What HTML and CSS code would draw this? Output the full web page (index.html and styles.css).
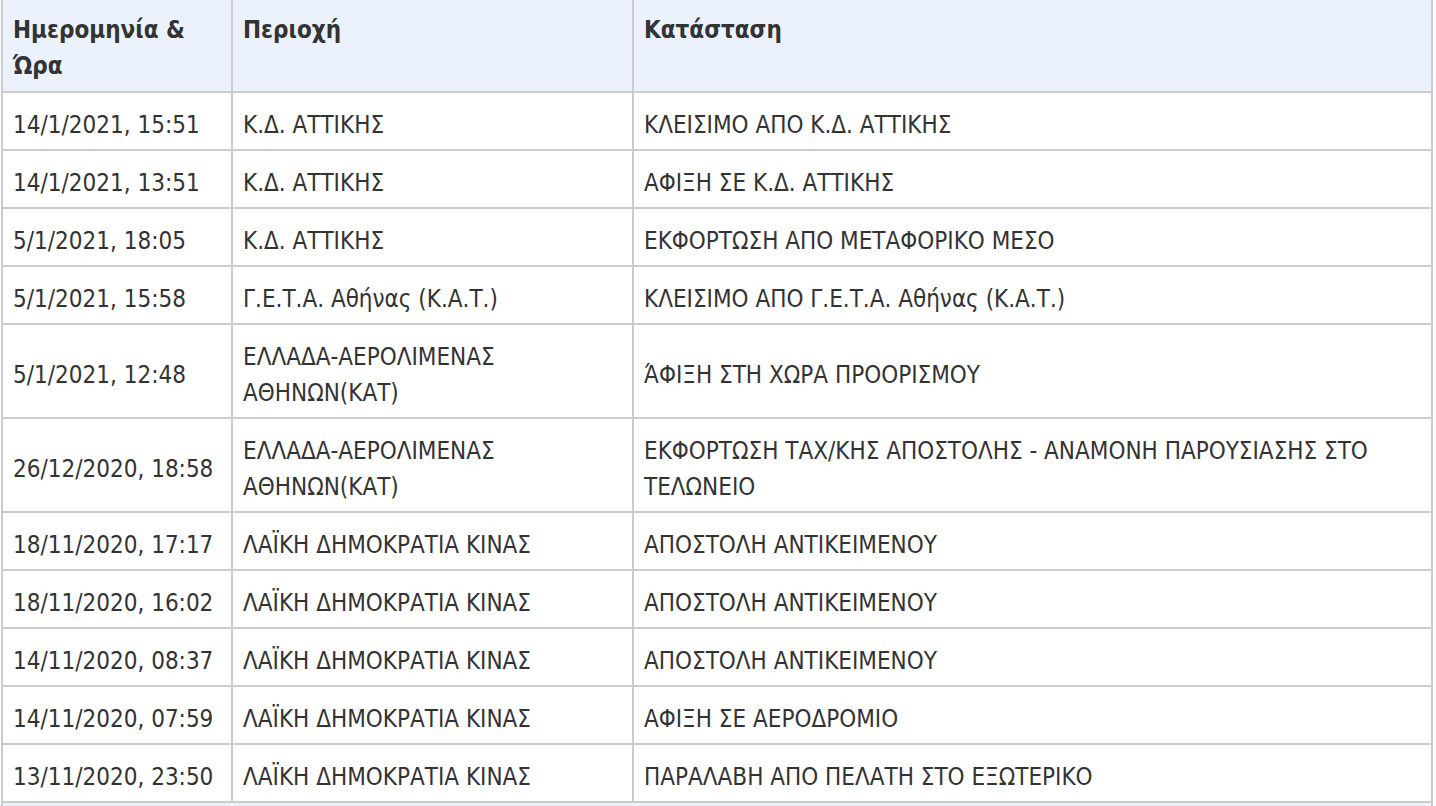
FILE: index.html
```html
<!DOCTYPE html>
<html lang="el">
<head>
<meta charset="utf-8">
<title>Ιστορικό αποστολής</title>
<link rel="stylesheet" href="styles.css">
</head>
<body>
<table class="track">
  <colgroup>
    <col class="c-date">
    <col class="c-area">
    <col class="c-status">
  </colgroup>
  <thead>
    <tr>
      <th>Ημερομηνία &amp; Ώρα</th>
      <th>Περιοχή</th>
      <th>Κατάσταση</th>
    </tr>
  </thead>
  <tbody>
    <tr><td>14/1/2021, 15:51</td><td>Κ.Δ. ΑΤΤΙΚΗΣ</td><td>ΚΛΕΙΣΙΜΟ ΑΠΟ Κ.Δ. ΑΤΤΙΚΗΣ</td></tr>
    <tr><td>14/1/2021, 13:51</td><td>Κ.Δ. ΑΤΤΙΚΗΣ</td><td>ΑΦΙΞΗ ΣΕ Κ.Δ. ΑΤΤΙΚΗΣ</td></tr>
    <tr><td>5/1/2021, 18:05</td><td>Κ.Δ. ΑΤΤΙΚΗΣ</td><td>ΕΚΦΟΡΤΩΣΗ ΑΠΟ ΜΕΤΑΦΟΡΙΚΟ ΜΕΣΟ</td></tr>
    <tr><td>5/1/2021, 15:58</td><td>Γ.Ε.Τ.Α. Αθήνας (Κ.Α.Τ.)</td><td>ΚΛΕΙΣΙΜΟ ΑΠΟ Γ.Ε.Τ.Α. Αθήνας (Κ.Α.Τ.)</td></tr>
    <tr><td>5/1/2021, 12:48</td><td>ΕΛΛΑΔΑ-ΑΕΡΟΛΙΜΕΝΑΣ ΑΘΗΝΩΝ(ΚΑΤ)</td><td>ΆΦΙΞΗ ΣΤΗ ΧΩΡΑ ΠΡΟΟΡΙΣΜΟΥ</td></tr>
    <tr><td>26/12/2020, 18:58</td><td>ΕΛΛΑΔΑ-ΑΕΡΟΛΙΜΕΝΑΣ ΑΘΗΝΩΝ(ΚΑΤ)</td><td>ΕΚΦΟΡΤΩΣΗ ΤΑΧ/ΚΗΣ ΑΠΟΣΤΟΛΗΣ - ΑΝΑΜΟΝΗ ΠΑΡΟΥΣΙΑΣΗΣ ΣΤΟ ΤΕΛΩΝΕΙΟ</td></tr>
    <tr><td>18/11/2020, 17:17</td><td>ΛΑΪΚΗ ΔΗΜΟΚΡΑΤΙΑ ΚΙΝΑΣ</td><td>ΑΠΟΣΤΟΛΗ ΑΝΤΙΚΕΙΜΕΝΟΥ</td></tr>
    <tr><td>18/11/2020, 16:02</td><td>ΛΑΪΚΗ ΔΗΜΟΚΡΑΤΙΑ ΚΙΝΑΣ</td><td>ΑΠΟΣΤΟΛΗ ΑΝΤΙΚΕΙΜΕΝΟΥ</td></tr>
    <tr><td>14/11/2020, 08:37</td><td>ΛΑΪΚΗ ΔΗΜΟΚΡΑΤΙΑ ΚΙΝΑΣ</td><td>ΑΠΟΣΤΟΛΗ ΑΝΤΙΚΕΙΜΕΝΟΥ</td></tr>
    <tr><td>14/11/2020, 07:59</td><td>ΛΑΪΚΗ ΔΗΜΟΚΡΑΤΙΑ ΚΙΝΑΣ</td><td>ΑΦΙΞΗ ΣΕ ΑΕΡΟΔΡΟΜΙΟ</td></tr>
    <tr><td>13/11/2020, 23:50</td><td>ΛΑΪΚΗ ΔΗΜΟΚΡΑΤΙΑ ΚΙΝΑΣ</td><td>ΠΑΡΑΛΑΒΗ ΑΠΟ ΠΕΛΑΤΗ ΣΤΟ ΕΞΩΤΕΡΙΚΟ</td></tr>
  </tbody>
  <tfoot>
    <tr><td colspan="3" class="foot">&nbsp;</td></tr>
  </tfoot>
</table>
</body>
</html>
```

FILE: styles.css
```css
html, body {
  margin: 0;
  padding: 0;
  background: #ffffff;
}

body {
  font-family: "DejaVu Sans Condensed", "DejaVu Sans", "Liberation Sans", sans-serif;
  font-stretch: condensed;
  font-size: 24px;
  line-height: 36px;
  color: #333333;
}

.track {
  margin-left: 1px;
  width: 1432px;
  table-layout: fixed;
  border-collapse: separate;
  border-spacing: 0;
  border-left: 2px solid #cccccc;
}

.c-date { width: 230px; }
.c-area { width: 401px; }
.c-status { width: 799px; }

.track th,
.track td {
  border-right: 2px solid #cccccc;
  border-bottom: 2px solid #cccccc;
  text-align: left;
}

.track th {
  background: #ebf2fd;
  font-weight: bold;
  vertical-align: top;
  padding: 12px 10px 7px 10px;
}

.track td {
  background: #ffffff;
  vertical-align: middle;
  padding: 14px 10px 6px 10px;
}

.track td.foot {
  background: #ebf2fd;
}
```
